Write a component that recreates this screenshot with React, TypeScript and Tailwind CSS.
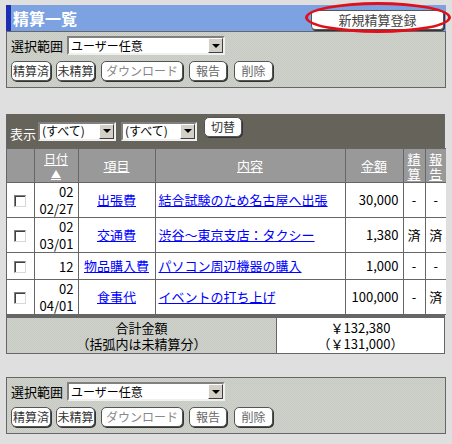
import React from 'react';

const FONT = { fontFamily: '"Noto Sans CJK JP", "DejaVu Sans", sans-serif' };

const Btn: React.FC<{ label: string; tone?: string; className?: string }> = ({ label, tone = 'text-[#333]', className = '' }) => (
  <button
    className={`h-[20px] rounded-[5px] border border-[#555] bg-white shadow-[1px_1px_0_#333] text-[12px] leading-none whitespace-nowrap ${tone} ${className}`}
  >
    {label}
  </button>
);

const Select: React.FC<{ label: string; className?: string }> = ({ label, className = '' }) => (
  <div className={`flex items-stretch bg-white border-[2px] border-t-[#808080] border-l-[#808080] border-b-[#f0f0f0] border-r-[#f0f0f0] ${className}`}>
    <span className="flex-1 flex items-center px-[2px] text-[12px] leading-none text-black whitespace-nowrap">{label}</span>
    <span className="w-[15px] bg-[#d4d0c8] border border-t-white border-l-white border-b-[#404040] border-r-[#404040] flex items-center justify-center">
      <span className="block w-0 h-0 border-l-[4px] border-r-[4px] border-t-[4px] border-l-transparent border-r-transparent border-t-black" />
    </span>
  </div>
);

const panelBg = 'bg-[repeating-conic-gradient(#c6c8c2_0_25%,#d0d2cc_0_50%)] bg-[length:2px_2px]';

const Toolbar: React.FC = () => (
  <div className={`border border-[#666] ${panelBg} px-[4px] pt-[4px] pb-[6px]`}>
    <div className="flex items-center gap-[4px] h-[19px]">
      <span className="text-[13px] leading-none text-black">選択範囲</span>
      <Select label="ユーザー任意" className="w-[158px] h-[19px]" />
    </div>
    <div className="flex items-center mt-[6px]">
      <Btn label="精算済" className="w-[40px]" />
      <Btn label="未精算" className="w-[39px] ml-[5px]" />
      <Btn label="ダウンロード" tone="text-[#888]" className="w-[82px] ml-[6px]" />
      <Btn label="報告" tone="text-[#666]" className="w-[38px] ml-[6px]" />
      <Btn label="削除" tone="text-[#666]" className="w-[39px] ml-[7px]" />
    </div>
  </div>
);

type Row = { m: string; d?: string; item: string; desc: string; amt: string; s: string; r: string; h: string };

const rows: Row[] = [
  { m: '02', d: '02/27', item: '出張費', desc: '結合試験のため名古屋へ出張', amt: '30,000', s: '-', r: '-', h: 'h-[35px]' },
  { m: '02', d: '03/01', item: '交通費', desc: '渋谷～東京支店：タクシー', amt: '1,380', s: '済', r: '済', h: 'h-[35px]' },
  { m: '12', item: '物品購入費', desc: 'パソコン周辺機器の購入', amt: '1,000', s: '-', r: '-', h: 'h-[27px]' },
  { m: '02', d: '04/01', item: '食事代', desc: 'イベントの打ち上げ', amt: '100,000', s: '-', r: '済', h: 'h-[35px]' },
];

const App: React.FC = () => {
  return (
    <div className="w-[452px] h-[444px] bg-[#dfdfdf] pt-[5px] px-[6px] overflow-hidden" style={FONT}>
      {/* Title bar */}
      <div className="relative flex items-center h-[26px] bg-[#7ca2e1] border-l-[5px] border-[#1d2fb0]">
        <span className="ml-[2px] text-white font-bold text-[16px] leading-none">精算一覧</span>
        <div className="ml-auto mr-[2px]">
          <button className="w-[133px] h-[20px] rounded-[4px] border border-[#555] bg-white shadow-[1px_1px_0_#333] text-[13px] leading-none text-[#444]">
            新規精算登録
          </button>
        </div>
        <div className="absolute right-[-5px] top-[-3px] w-[146px] h-[31px] rounded-[50%] border-[3px] border-[#e0101a] pointer-events-none" />
      </div>

      <Toolbar />

      {/* List */}
      <div className="mt-[26px] w-[439px] border border-[#666] border-t-0">
        <div className="flex items-center h-[34px] bg-[#66635b] px-[3px] gap-[5px]">
          <span className="text-white text-[13px] leading-none mt-[4px]">表示</span>
          <Select label="(すべて)" className="w-[78px] h-[19px] -ml-[3px]" />
          <Select label="(すべて)" className="w-[76px] h-[19px]" />
          <button className="ml-[2px] -mt-[8px] h-[20px] w-[38px] rounded-[5px] border border-[#555] bg-white shadow-[1px_1px_0_#333] text-[12px] leading-none text-[#333]">
            切替
          </button>
        </div>
        <table className="w-full table-fixed border-collapse text-[13px] leading-[16px]">
          <colgroup>
            <col className="w-[27px]" />
            <col className="w-[44px]" />
            <col className="w-[77px]" />
            <col className="w-[190px]" />
            <col className="w-[58px]" />
            <col className="w-[22px]" />
            <col className="w-[21px]" />
          </colgroup>
          <thead>
            <tr className="h-[34px] bg-[#999999] text-white">
              <th className="border border-[#666] border-l-0" />
              <th className="border border-[#666] font-normal text-[12px] leading-[15px]">
                <div className="underline">日付</div>
                <div className="text-[10px] leading-[15px] underline">▲</div>
              </th>
              <th className="border border-[#666] font-normal underline">項目</th>
              <th className="border border-[#666] font-normal underline">内容</th>
              <th className="border border-[#666] font-normal underline">金額</th>
              <th className="border border-[#666] font-normal underline text-[13px] leading-[15px]">精<br />算</th>
              <th className="border border-[#666] border-r-0 font-normal underline text-[13px] leading-[15px]">報<br />告</th>
            </tr>
          </thead>
          <tbody className="bg-white text-black">
            {rows.map((r, i) => (
              <tr key={i} className={r.h}>
                <td className="border border-[#666] border-l-0 text-center">
                  <span className="inline-block align-middle w-[12px] h-[12px] border border-t-[#808080] border-l-[#808080] border-b-[#d8d8d8] border-r-[#d8d8d8] bg-white shadow-[inset_1px_1px_0_#404040]" />
                </td>
                <td className="border border-[#666] text-right pr-[4px] leading-[17px]">
                  <div>{r.m}</div>
                  {r.d && <div>{r.d}</div>}
                </td>
                <td className="border border-[#666] text-center">
                  <a className="text-[#0000ff] underline">{r.item}</a>
                </td>
                <td className="border border-[#666] pl-[3px] whitespace-nowrap overflow-hidden">
                  <a className="text-[#0000ff] underline">{r.desc}</a>
                </td>
                <td className="border border-[#666] text-right pr-[4px]">{r.amt}</td>
                <td className="border border-[#666] text-center">{r.s}</td>
                <td className="border border-[#666] border-r-0 text-center">{r.r}</td>
              </tr>
            ))}
          </tbody>
        </table>
        <div className="flex h-[38px] border-t-[3px] border-[#666] text-[13px] leading-[16px] text-black">
          <div className={`w-[269px] ${panelBg} flex flex-col items-center justify-center`}>
            <div>合計金額</div>
            <div>（括弧内は未精算分）</div>
          </div>
          <div className="flex-1 bg-white border-l border-[#666] flex flex-col items-center justify-center">
            <div>￥132,380</div>
            <div>（￥131,000）</div>
          </div>
        </div>
      </div>

      <div className="mt-[23px]">
        <Toolbar />
      </div>
    </div>
  );
};

export default App;
